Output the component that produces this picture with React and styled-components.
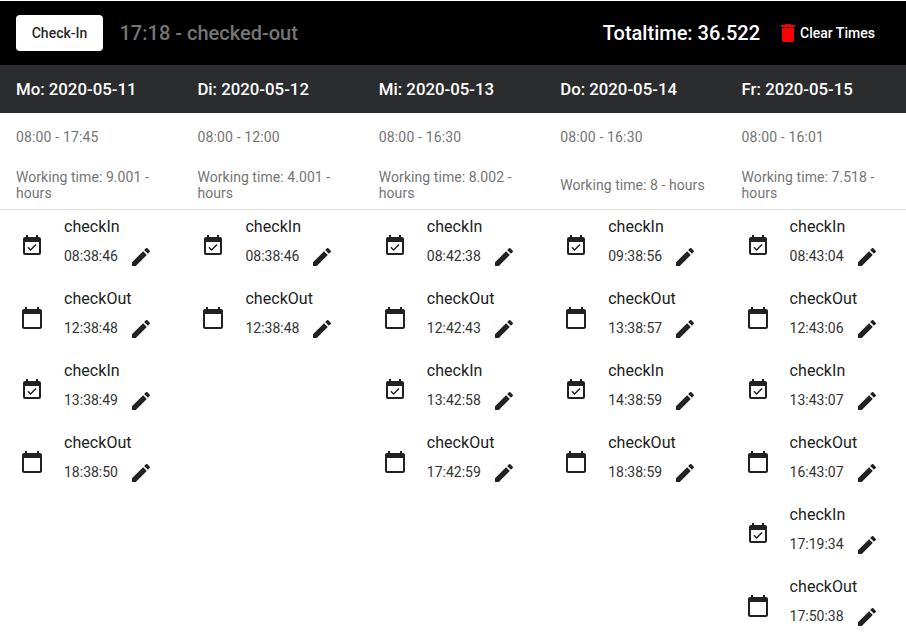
import styled, { createGlobalStyle } from "styled-components"
import { MdDelete, MdEdit } from "react-icons/md"

const days = [
  {
    title: "Mo: 2020-05-11",
    range: "08:00 - 17:45",
    working: "Working time: 9.001 - hours",
    times: ["08:38:46", "12:38:48", "13:38:49", "18:38:50"],
  },
  {
    title: "Di: 2020-05-12",
    range: "08:00 - 12:00",
    working: "Working time: 4.001 - hours",
    times: ["08:38:46", "12:38:48"],
  },
  {
    title: "Mi: 2020-05-13",
    range: "08:00 - 16:30",
    working: "Working time: 8.002 - hours",
    times: ["08:42:38", "12:42:43", "13:42:58", "17:42:59"],
  },
  {
    title: "Do: 2020-05-14",
    range: "08:00 - 16:30",
    working: "Working time: 8 - hours",
    times: ["09:38:56", "13:38:57", "14:38:59", "18:38:59"],
  },
  {
    title: "Fr: 2020-05-15",
    range: "08:00 - 16:01",
    working: "Working time: 7.518 - hours",
    times: ["08:43:04", "12:43:06", "13:43:07", "16:43:07", "17:19:34", "17:50:38"],
  },
]

function CheckInIcon() {
  return (
    <svg viewBox="0 0 24 24" fill="currentColor">
      <path d="M16.53 11.06L15.47 10l-4.88 4.88-2.12-2.12-1.06 1.06L10.59 17l5.94-5.94zM19 3h-1V1h-2v2H8V1H6v2H5c-1.11 0-1.99.9-1.99 2L3 19c0 1.1.89 2 2 2h14c1.1 0 2-.9 2-2V5c0-1.1-.9-2-2-2zm0 16H5V8h14v11z" />
    </svg>
  )
}

function CheckOutIcon() {
  return (
    <svg viewBox="0 0 24 24" fill="currentColor">
      <path d="M20 3h-1V1h-2v2H7V1H5v2H4c-1.1 0-2 .9-2 2v16c0 1.1.9 2 2 2h16c1.1 0 2-.9 2-2V5c0-1.1-.9-2-2-2zm0 18H4V8h16v13z" />
    </svg>
  )
}

export default function App() {
  return (
    <Page>
      <GlobalStyle />
      <Toolbar>
        <CheckInButton>Check-In</CheckInButton>
        <Status>17:18 - checked-out</Status>
        <Total>Totaltime: 36.522</Total>
        <ClearButton>
          <MdDelete />
          Clear Times
        </ClearButton>
      </Toolbar>
      <Week>
        {days.map((day) => (
          <Day key={day.title}>
            <DayTitle>{day.title}</DayTitle>
            <Range>{day.range}</Range>
            <Working>{day.working}</Working>
            <List>
              {day.times.map((time, i) => (
                <Entry key={time}>
                  <EntryIcon>{i % 2 === 0 ? <CheckInIcon /> : <CheckOutIcon />}</EntryIcon>
                  <EntryText>
                    <EntryName>{i % 2 === 0 ? "checkIn" : "checkOut"}</EntryName>
                    <EntryTime>
                      {time}
                      <MdEdit />
                    </EntryTime>
                  </EntryText>
                </Entry>
              ))}
            </List>
          </Day>
        ))}
      </Week>
    </Page>
  )
}

const GlobalStyle = createGlobalStyle`
  html, body {
    margin: 0;
    background: #fff;
  }
  body {
    font-family: Roboto, "Liberation Sans", sans-serif;
  }
`

const Page = styled.div`
  width: 906px;
  height: 641px;
  overflow: hidden;
  padding-top: 1px;
  box-sizing: border-box;
`

const Toolbar = styled.div`
  height: 64px;
  background: #000;
  display: flex;
  align-items: center;
  padding: 0 16px;
`

const CheckInButton = styled.button`
  width: 87px;
  height: 36px;
  border: 0;
  border-radius: 4px;
  background: #fff;
  color: rgba(0, 0, 0, 0.87);
  font: 500 14px Roboto, sans-serif;
`

const Status = styled.div`
  margin-left: 16.5px;
  color: #757575;
  font-size: 20px;
  font-weight: 500;
  flex: 1;
`

const Total = styled.div`
  color: #fff;
  font-size: 20px;
  font-weight: 500;
`

const ClearButton = styled.div`
  display: flex;
  align-items: center;
  margin-left: 16px;
  width: 114px;
  color: #fff;
  font-size: 14px;
  font-weight: 500;

  svg {
    width: 24px;
    height: 24px;
    color: #f00;
  }
`

const Week = styled.div`
  display: grid;
  width: 907px;
  grid-template-columns: repeat(5, 1fr);
`

const Day = styled.div`
  display: flex;
  flex-direction: column;
  min-width: 0;
`

const DayTitle = styled.div`
  height: 48px;
  background: #2b2c2e;
  color: #fff;
  font-size: 16.8px;
  font-weight: 500;
  line-height: 48px;
  padding-left: 16px;
`

const Range = styled.div`
  height: 48px;
  line-height: 48px;
  padding-left: 16px;
  color: #757575;
  font-size: 14px;
  letter-spacing: 0.15px;
`

const Working = styled.div`
  height: 49px;
  box-sizing: border-box;
  border-bottom: 1px solid #e0e0e0;
  display: flex;
  align-items: center;
  padding: 0 16px 1px;
  color: #757575;
  font-size: 14px;
  letter-spacing: 0.06px;
  line-height: 16px;
`

const List = styled.div`
  display: flex;
  flex-direction: column;
`

const Entry = styled.div`
  height: 72px;
  display: flex;
  padding-left: 20px;
`

const EntryIcon = styled.div`
  width: 44px;
  flex: none;
  display: flex;
  align-items: center;
  color: #212121;

  svg {
    width: 24px;
    height: 24px;
  }
`

const EntryText = styled.div`
  padding-top: 7px;
`

const EntryName = styled.div`
  color: #212121;
  font-size: 16px;
  letter-spacing: 0.05px;
  line-height: 20px;
`

const EntryTime = styled.div`
  display: flex;
  align-items: center;
  height: 24px;
  margin-top: 7px;
  color: #333;
  font-size: 14px;

  svg {
    width: 24px;
    height: 24px;
    color: #212121;
    margin-left: 11px;
    margin-top: 1px;
  }
`
